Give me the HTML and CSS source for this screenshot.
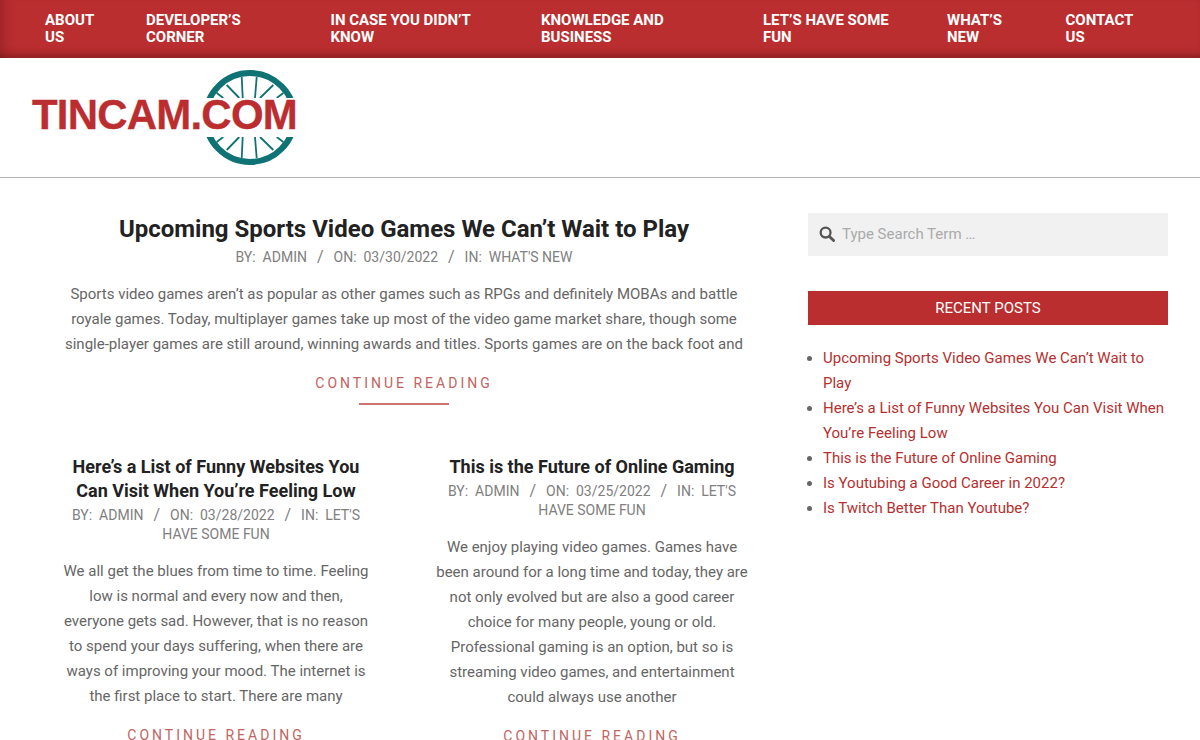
FILE: index.html
```html
<!DOCTYPE html>
<html lang="en">
<head>
    <meta charset="UTF-8">
    <meta name="viewport" content="width=device-width, initial-scale=1.0">
    <title>Tincam.com</title>
    <link rel="stylesheet" href="styles.css">
</head>
<body>
    <nav class="topnav">
        <a href="#">About<br>Us</a>
        <a href="#">Developer’s<br>Corner</a>
        <a href="#">In Case You Didn’t<br>Know</a>
        <a href="#">Knowledge and<br>Business</a>
        <a href="#">Let’s Have Some<br>Fun</a>
        <a href="#">What’s<br>New</a>
        <a href="#">Contact<br>Us</a>
    </nav>
    <header class="site-header">
        <a class="logo" href="#">
            <svg class="wheel" viewBox="200 68 100 100" width="100" height="100">
                <defs>
                    <clipPath id="bands">
                        <rect x="200" y="68" width="100" height="30"></rect>
                        <rect x="200" y="137" width="100" height="31"></rect>
                    </clipPath>
                </defs>
                <g clip-path="url(#bands)" fill="none" stroke="#0f7274">
                    <circle cx="250" cy="117.5" r="44.5" stroke-width="6"></circle>
                    <g stroke-width="1.8">
                        <path d="M241.7 77 L242.7 98 M256.7 77 L255 98 M226.7 85 L239.3 98 M273.3 85 L260 98 M216.7 93 L223.3 98 M283.3 93 L276.7 98"></path>
                        <path d="M241.7 158 L242.7 137 M256.7 158 L255 137 M226.7 150 L239.3 137 M273.3 150 L260 137 M216.7 142 L223.3 137 M283.3 142 L276.7 137"></path>
                    </g>
                </g>
            </svg>
            <span class="logo-text">TINCAM.COM</span>
        </a>
    </header>
    <div class="page">
        <main class="content">
            <article class="post post-featured">
                <h2>Upcoming Sports Video Games We Can’t Wait to Play</h2>
                <p class="meta"><span>By:&nbsp; Admin</span><i>/</i><span>On:&nbsp; 03/30/2022</span><i>/</i><span>In:&nbsp; What's New</span></p>
                <p class="excerpt">Sports video games aren’t as popular as other games such as RPGs and definitely MOBAs and battle royale games. Today, multiplayer games take up most of the video game market share, though some single-player games are still around, winning awards and titles. Sports games are on the back foot and</p>
                <a class="more" href="#">Continue Reading</a>
            </article>
            <div class="post-grid">
                <article class="post">
                    <h3>Here’s a List of Funny Websites You Can Visit When You’re Feeling Low</h3>
                    <p class="meta"><span>By:&nbsp; Admin</span><i>/</i><span>On:&nbsp; 03/28/2022</span><i>/</i>In:&nbsp; Let's Have Some Fun</p>
                    <p class="excerpt">We all get the blues from time to time. Feeling low is normal and every now and then, everyone gets sad. However, that is no reason to spend your days suffering, when there are ways of improving your mood. The internet is the first place to start. There are many</p>
                    <a class="more" href="#">Continue Reading</a>
                </article>
                <article class="post">
                    <h3>This is the Future of Online Gaming</h3>
                    <p class="meta"><span>By:&nbsp; Admin</span><i>/</i><span>On:&nbsp; 03/25/2022</span><i>/</i>In:&nbsp; Let's Have Some Fun</p>
                    <p class="excerpt">We enjoy playing video games. Games have been around for a long time and today, they are not only evolved but are also a good career choice for many people, young or old. Professional gaming is an option, but so is streaming video games, and entertainment could always use another</p>
                    <a class="more" href="#">Continue Reading</a>
                </article>
            </div>
        </main>
        <aside class="sidebar">
            <form class="search">
                <svg class="search-icon" viewBox="0 0 16 16" width="16" height="16">
                    <circle cx="6.6" cy="6.6" r="4.9" fill="none" stroke="#555" stroke-width="2.3"></circle>
                    <path d="M10.4 10.4 L14.6 14.6" stroke="#555" stroke-width="2.8" stroke-linecap="round"></path>
                </svg>
                <span class="placeholder">Type Search Term …</span>
            </form>
            <h4 class="widget-title">Recent Posts</h4>
            <ul class="recent">
                <li><a href="#">Upcoming Sports Video Games We Can’t Wait to Play</a></li>
                <li><a href="#">Here’s a List of Funny Websites You Can Visit When You’re Feeling Low</a></li>
                <li><a href="#">This is the Future of Online Gaming</a></li>
                <li><a href="#">Is Youtubing a Good Career in 2022?</a></li>
                <li><a href="#">Is Twitch Better Than Youtube?</a></li>
            </ul>
        </aside>
    </div>
</body>
</html>
```

FILE: styles.css
```css
body {
    margin: 0;
    height: 740px;
    overflow: hidden;
    background: #fff;
    color: #666;
    font-family: Roboto, sans-serif;
    font-size: 15px;
}
a {
    color: inherit;
    text-decoration: none;
}
.topnav {
    display: grid;
    grid-template-columns: 101px 184.5px 210.5px 222px 184px 118.5px auto;
    height: 58px;
    box-sizing: border-box;
    padding: 12px 0 0 45px;
    background: #ba2e30;
    box-shadow: inset 0 -9px 8px -6px rgba(70, 10, 10, 0.45), inset 14px 0 12px -10px rgba(70, 10, 10, 0.25);
}
.topnav a {
    color: #fff;
    font-size: 15px;
    font-weight: 700;
    line-height: 17px;
    text-transform: uppercase;
}
.site-header {
    height: 119px;
    border-bottom: 1px solid #b5b5b5;
    padding-left: 32px;
}
.logo {
    position: relative;
    display: block;
    width: 270px;
    height: 119px;
}
.wheel {
    position: absolute;
    left: 168px;
    top: 10px;
}
.logo-text {
    position: absolute;
    left: 0;
    top: 32px;
    color: #bb2d2f;
    font-family: "Liberation Sans", Arial, sans-serif;
    font-size: 42px;
    font-weight: 700;
    letter-spacing: -0.8px;
    line-height: 50px;
    white-space: nowrap;
    -webkit-text-stroke: 0.3px #bb2d2f;
}
.page {
    display: flex;
    padding: 0 32px 0 48px;
    justify-content: space-between;
}
.content {
    width: 712px;
    padding-top: 35px;
}
.post {
    text-align: center;
}
.post h2 {
    margin: 0;
    color: #222;
    font-size: 24px;
    font-weight: 700;
    line-height: 32px;
}
.post h3 {
    margin: 0;
    color: #222;
    font-size: 18px;
    font-weight: 700;
    line-height: 24px;
}
.meta {
    margin: 2px 0 0;
    font-size: 14px;
    line-height: 19px;
    text-transform: uppercase;
    color: #808080;
}
.meta i {
    margin: 0 10px;
    font-style: normal;
    font-size: 16px;
}
.excerpt {
    margin: 15px 0 0;
    font-size: 15px;
    line-height: 25px;
}
.more {
    display: flex;
    justify-content: center;
    width: 90px;
    margin: 16px auto 0;
    padding-bottom: 10px;
    border-bottom: 2px solid #cd7272;
    color: #bf6461;
    font-size: 14px;
    letter-spacing: 3px;
    line-height: 20px;
    text-transform: uppercase;
    white-space: nowrap;
}
.post-featured {
    padding: 0 15px;
}
.post-grid {
    display: grid;
    grid-template-columns: 336px 336px;
    gap: 40px;
    margin-top: 50px;
}
.post-grid .post {
    padding: 0 10px;
}
.sidebar {
    width: 360px;
    padding-top: 35px;
}
.search {
    display: flex;
    align-items: center;
    height: 41px;
    margin: 0;
    padding: 0 0 2px 11px;
    background: #f1f1f1;
}
.search-icon {
    margin-right: 7px;
}
.placeholder {
    color: #aaa;
    font-size: 15px;
}
.widget-title {
    margin: 35px 0 0;
    height: 34px;
    background: #ba2e30;
    color: #fff;
    font-size: 15px;
    font-weight: 400;
    line-height: 34px;
    text-align: center;
    text-transform: uppercase;
}
.recent {
    margin: 21px 0 0;
    padding-left: 15px;
    font-size: 15px;
    line-height: 25px;
}
.recent a {
    color: #b5302f;
}
```
